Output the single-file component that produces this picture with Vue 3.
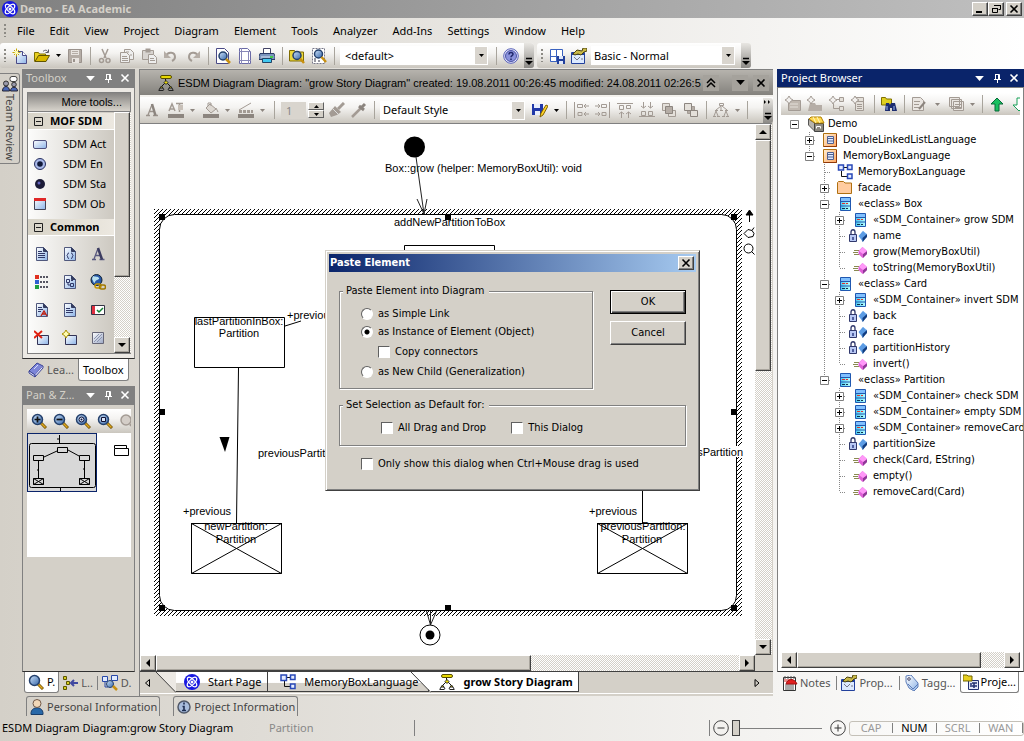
<script setup>
import { ref, computed } from 'vue'

const menus = ['File', 'Edit', 'View', 'Project', 'Diagram', 'Element', 'Tools', 'Analyzer', 'Add-Ins', 'Settings', 'Window', 'Help']

const fileTools = [
  { icon: 'new', label: 'New' }, { icon: 'open', label: 'Open', arrow: true }, { icon: 'save', label: 'Save' }, { sep: true },
  { icon: 'cut', label: 'Cut' }, { icon: 'copy', label: 'Copy' }, { icon: 'paste', label: 'Paste' },
  { icon: 'undo', label: 'Undo' }, { icon: 'redo', label: 'Redo' }, { sep: true },
  { icon: 'preview', label: 'Print preview' }, { icon: 'page', label: 'Page setup' }, { icon: 'print', label: 'Print' }, { sep: true },
  { icon: 'findproj', label: 'Find in project' }, { icon: 'finddoc', label: 'Find in document' }, { sep: true }
]
const alignTools = ['al-left', 'al-right', 'al-top', 'al-bottom', 'front', 'back']
const browserTools = [
  { icon: 'npkg', label: 'New model' }, { icon: 'nfolder', label: 'New package' }, { icon: 'ndiag', label: 'New diagram' },
  { icon: 'nelem', label: 'New element' }, { sep: true }, { icon: 'binoc', label: 'Find' }, { sep: true },
  { icon: 'docgen', label: 'Documentation', arrow: true, wide: true }, { icon: 'copies', label: 'Code', arrow: true }, { sep: true },
  { icon: 'up', label: 'Move up' }, { icon: 'down', label: 'Move down' }
]
const sdmItems = [
  { icon: 'act', label: 'SDM Act' }, { icon: 'end', label: 'SDM En' },
  { icon: 'start', label: 'SDM Sta' }, { icon: 'obj', label: 'SDM Ob' }
]
const commonItems = ['note', 'doc', 'text', 'legend', 'ddoc', 'link', 'adoc', 'doc2', 'check', 'del', 'newel', 'shade']

const c = (label) => ({ label: '«SDM_Container» ' + label, icon: 't-class', closed: true })
const attr = (label) => ({ label, icon: 't-attr' })
const op = (label) => ({ label, icon: 't-op' })
const model = {
  label: 'Demo', icon: 't-root', children: [
    { label: 'DoubleLinkedListLanguage', icon: 't-pkg', closed: true },
    { label: 'MemoryBoxLanguage', icon: 't-pkg', children: [
      { label: 'MemoryBoxLanguage', icon: 't-diag' },
      { label: 'facade', icon: 't-folder', closed: true },
      { label: '«eclass» Box', icon: 't-class', children: [c('grow SDM'), attr('name'), op('grow(MemoryBoxUtil)'), op('toString(MemoryBoxUtil)')] },
      { label: '«eclass» Card', icon: 't-class', children: [c('invert SDM'), attr('back'), attr('face'), attr('partitionHistory'), op('invert()')] },
      { label: '«eclass» Partition', icon: 't-class', children: [c('check SDM'), c('empty SDM'), c('removeCard'), attr('partitionSize'), op('check(Card, EString)'), op('empty()'), op('removeCard(Card)')] }
    ] }
  ]
}
const rows = computed(() => {
  const out = []
  const walk = (node, guides, last, root) => {
    out.push({ ...node, guides, last, root, sign: node.children ? 'minus' : node.closed ? 'plus' : '' })
    const kids = node.children || []
    kids.forEach((k, i) => walk(k, [...guides, !last], i === kids.length - 1, false))
  }
  walk(model, [], true, true)
  return out
})

const mode = ref('instance')
const zoom = ref(0)
const handles = [[159, 214], [445, 214], [731, 214], [159, 409], [731, 409], [159, 605], [445, 605], [731, 605]]
</script>

<template>
  <svg class="defs" aria-hidden="true">
    <defs>
      <linearGradient id="gBlue" x1="0" y1="0" x2="1" y2="1"><stop offset="0" stop-color="#fff" /><stop offset="1" stop-color="#8db4e8" /></linearGradient>
      <linearGradient id="gSph" x1="0" y1="0" x2="1" y2="1"><stop offset="0" stop-color="#cfe4fb" /><stop offset="1" stop-color="#3465a8" /></linearGradient>
      <linearGradient id="gPkg" x1="0" y1="0" x2="1" y2="1"><stop offset="0" stop-color="#fff0d8" /><stop offset="1" stop-color="#ffa860" /></linearGradient>
      <linearGradient id="gCls" x1="0" y1="0" x2="1" y2="0"><stop offset="0" stop-color="#48c8f0" /><stop offset="1" stop-color="#b8ffff" /></linearGradient>
      <linearGradient id="gShade" x1="0" y1="0" x2="1" y2="1"><stop offset="0" stop-color="#fff" /><stop offset="1" stop-color="#9aa6c4" /></linearGradient>
      <pattern id="hatch" width="4" height="4" patternUnits="userSpaceOnUse">
        <path fill="#000" shape-rendering="crispEdges" d="M3 0h1v1h-1zM2 1h1v1h-1zM1 2h1v1h-1zM0 3h1v1h-1z" />
      </pattern>
    </defs>
    <symbol id="logo" viewBox="0 0 16 16"><circle cx="8" cy="8" r="8" fill="#1818e0" /><g fill="none" stroke="#fff" stroke-width="1.3"><ellipse cx="8" cy="8" rx="6" ry="2.600" transform="rotate(45 8 8)" /><ellipse cx="8" cy="8" rx="6" ry="2.600" transform="rotate(-45 8 8)" /></g><circle cx="8" cy="8" r="1.500" fill="#fff" /></symbol>
    <symbol id="new" viewBox="0 0 16 16"><path d="M4.500 3.500h6l4 4v8h-10z" fill="url(#gBlue)" stroke="#4a4a86" /><path d="M10.500 3.500v4h4" fill="#fff" stroke="#4a4a86" /><path d="M4.500 .500v8M.500 4.500h8M2 2l5 5M7 2l-5 5" stroke="#c8a800" /><circle cx="4.500" cy="4.500" r="1.800" fill="#ffffb0" /></symbol>
    <symbol id="open" viewBox="0 0 16 16"><path d="M.500 13.500v-9h4l1 1.500h6v2" fill="#e8d020" stroke="#807000" /><path d="M1 13.500l3.500-6h11l-3.500 6z" fill="#d8b800" stroke="#605400" /><path d="M9 3.500c2-2 4-1.500 5 .500M14.500 1.500v3h-3" fill="none" stroke="#556" /></symbol>
    <symbol id="save" viewBox="0 0 16 16"><path d="M1.500 1.500h13v13h-13z" fill="#b5ada6" stroke="#9a928c" /><path d="M4 2h8v5h-8zM5 10h7v5h-7z" fill="#e8e4e0" /><path d="M5 3.500h6M5 5.500h6" stroke="#b5ada6" /><path d="M6 11h2v3h-2z" fill="#9a928c" /></symbol>
    <symbol id="cut" viewBox="0 0 16 16"><path d="M5 1l4 9M11 1l-4 9" stroke="#a39b94" stroke-width="1.500" /><circle cx="4.500" cy="12.500" r="2" fill="none" stroke="#a39b94" stroke-width="1.500" /><circle cx="11" cy="12.500" r="2" fill="none" stroke="#a39b94" stroke-width="1.500" /></symbol>
    <symbol id="copy" viewBox="0 0 16 16"><path d="M5.500 1.500h6l3 3v7h-9z" fill="#eee" stroke="#a39b94" /><path d="M1.500 4.500h6l3 3v7h-9z" fill="#eee" stroke="#a39b94" /><path d="M3 8.500h5M3 10.500h6M3 12.500h6M7 4h3M11 7h2" stroke="#a39b94" /></symbol>
    <symbol id="paste" viewBox="0 0 16 16"><path d="M1.500 2.500h11v9h-11z" fill="#d8d4d0" stroke="#a39b94" /><path d="M4.500 .500h5v4h-5z" fill="#a39b94" /><path d="M7.500 6.500h5l3 3v6h-8z" fill="#eee" stroke="#a39b94" /><path d="M9 10.500h4M9 12.500h5" stroke="#a39b94" /></symbol>
    <symbol id="undo" viewBox="0 0 16 16"><path d="M3 8c2-5 9-4 9 1 0 2-1 3-3 4" fill="none" stroke="#a39b94" stroke-width="2" /><path d="M1 3v7h7z" fill="#b5ada6" /></symbol>
    <symbol id="redo" viewBox="0 0 16 16"><path d="M13 8c-2-5-9-4-9 1 0 2 1 3 3 4" fill="none" stroke="#a39b94" stroke-width="2" /><path d="M15 3v7h-7z" fill="#b5ada6" /></symbol>
    <symbol id="lens" viewBox="0 0 16 16"><path d="M10 10l5 5" stroke="#705000" stroke-width="3" /><path d="M10 10l4.500 4.500" stroke="#e0a820" stroke-width="1.500" /><circle cx="6.500" cy="6.500" r="5" fill="url(#gSph)" stroke="#24406c" stroke-width="1.500" /></symbol>
    <symbol id="preview" viewBox="0 0 16 16"><path d="M1.500 .500h8l4 4v11h-12z" fill="#fff" stroke="#4a4a86" /><circle cx="8" cy="8" r="4" fill="url(#gSph)" stroke="#24406c" stroke-width="1.500" /><path d="M11 11l4 4" stroke="#c89010" stroke-width="2.500" /></symbol>
    <symbol id="page" viewBox="0 0 16 16"><path d="M2.500 .500h8l3 3v12h-11z" fill="#fff" stroke="#6a6aa6" /><path d="M4.500 0v16M11.500 3v13M2 3.500h11M2 12.500h12" stroke="#8888b8" /></symbol>
    <symbol id="print" viewBox="0 0 16 16"><path d="M4.500 5v-4.500h7v4.500" fill="#fff" stroke="#446" /><path d="M1 5.500h14l1 3v3h-16v-3z" fill="#7b95bd" stroke="#2a3a66" /><path d="M2 9h12" stroke="#d8e4f6" /><path d="M11 9h3" stroke="#20d020" stroke-width="1.500" /><path d="M3.500 10.500h9v4h-9z" fill="#40c8f0" stroke="#246" /></symbol>
    <symbol id="findproj" viewBox="0 0 16 16"><path d="M.500 2.500h5l1 1.500h8v9h-14z" fill="#ecd83a" stroke="#806c00" /><circle cx="8" cy="7.500" r="4" fill="url(#gSph)" stroke="#24406c" stroke-width="1.500" /><path d="M11 10.500l4 4.500" stroke="#c89010" stroke-width="2.500" /></symbol>
    <symbol id="finddoc" viewBox="0 0 16 16"><path d="M1.500 .500h12v15h-12z" fill="#fff" stroke="#778" stroke-dasharray="2 1" /><path d="M3 11h2M3 13h2M7 13h2" stroke="#334" /><circle cx="7.500" cy="6" r="4" fill="url(#gSph)" stroke="#24406c" stroke-width="1.500" /><path d="M10.500 9l4.500 5" stroke="#c89010" stroke-width="2.500" /></symbol>
    <symbol id="help" viewBox="0 0 16 16"><circle cx="8" cy="8" r="7.300" fill="#e8eaff" stroke="#5a62b8" /><circle cx="8" cy="8" r="5.500" fill="#8a92dc" stroke="#4c54a6" /><path d="M6 6.500c0-3 4-2.500 4-.300 0 1.500-2 1.300-2 3M8 10.500v1.500" fill="none" stroke="#20286c" stroke-width="1.500" /></symbol>
    <symbol id="layout" viewBox="0 0 16 16"><path d="M1.500 1.500h12v12h-12zM7.500 1.500v12M1.500 8.500h12" fill="#fff" stroke="#3a62c0" /><path d="M8 8h8v8h-8z" fill="#22409c" /><path d="M10 8h4v3h-4zM10 13h4v3h-4z" fill="#dfe8fa" /></symbol>
    <symbol id="props" viewBox="0 0 16 16"><path d="M.500 4.500h13v11h-13z" fill="#dceaff" stroke="#22409c" /><path d="M1 5h12v2h-12z" fill="#22409c" /><path d="M3 9l3 3 3-3M10 11h2" stroke="#778" fill="none" /><path d="M2 6l4-4 5 1 1-3h4v3l-3 1-3 3-3-1-3 1z" fill="#c8b848" stroke="#4c4410" /></symbol>
    <symbol id="fontA" viewBox="0 0 16 16"><path d="M2 13.500h4M9 13.500h5M4 13l4-10.500M5.500 9.500h5" fill="none" stroke="#9b938c" stroke-width="1.300" /><path d="M8 2l3.500 11.500" stroke="#8c857f" stroke-width="2.500" /></symbol>
    <symbol id="fontcol" viewBox="0 0 16 16"><path d="M1 9l3-7 3 7M2 7h4M8 1.500h7M11.500 2v8" fill="none" stroke="#a39b94" stroke-width="1.500" /><path d="M10 3h5v5h-5z" fill="#c8c0b8" /><path d="M0 12h16v4h-16z" fill="#8c857f" /></symbol>
    <symbol id="fill" viewBox="0 0 16 16"><path d="M3 6l4-4 6 5-5 4z" fill="#ddd8d2" stroke="#a39b94" /><path d="M5 4v-3h3v3M13 6l2 4" stroke="#a39b94" fill="none" /><path d="M0 12h16v4h-16z" fill="#8c857f" /></symbol>
    <symbol id="linecol" viewBox="0 0 16 16"><path d="M1 8l12-7" stroke="#a39b94" fill="none" /><path d="M1 9.500h14" stroke="#a39b94" stroke-width="3" stroke-dasharray="3 1" /><path d="M0 12h16v4h-16z" fill="#8c857f" /></symbol>
    <symbol id="brush" viewBox="0 0 16 16"><path d="M15 1l-6 6" stroke="#a39b94" stroke-width="3" /><path d="M6 4l6 6-4 3-6 2-2-4z" fill="#a39b94" /><path d="M4 7l5 5" stroke="#ddd" /></symbol>
    <symbol id="dropper" viewBox="0 0 16 16"><path d="M10 6l-8 8-1 1" stroke="#a39b94" stroke-width="2.500" /><path d="M8 4l5 4M10 6l4-4" stroke="#8c857f" stroke-width="3" /></symbol>
    <symbol id="savestyle" viewBox="0 0 16 16"><path d="M0 2h11v11h-11z" fill="#2038a8" /><path d="M2 2h6v4h-6zM3 9h5v4h-5z" fill="#e8eefc" /><path d="M8 15l1-4 5-8 2 1-5 9z" fill="#ffd428" stroke="#806000" /></symbol>
    <symbol id="al-left" viewBox="0 0 16 16"><path d="M1.500 0v16M4.500 2.500h5v3h-5zM5 10.500h4v3h-4zM11 4h5M11 12h5M13 2l-2 2 2 2M13 10l-2 2 2 2" fill="none" stroke="#a39b94" /></symbol>
    <symbol id="al-right" viewBox="0 0 16 16"><path d="M14.500 0v16M6.500 2.500h5v3h-5zM7 10.500h4v3h-4zM0 4h5M0 12h5M3 2l2 2-2 2M3 10l2 2-2 2" fill="none" stroke="#a39b94" /></symbol>
    <symbol id="al-top" viewBox="0 0 16 16"><path d="M0 1.500h16M2.500 3.500h4v4h-4zM9.500 3.500h4v3h-4zM4.500 10v6M11.500 10v6M2 12l2.500-2 2.500 2M9 12l2.500-2 2.500 2" fill="none" stroke="#a39b94" /></symbol>
    <symbol id="al-bottom" viewBox="0 0 16 16"><path d="M0 14.500h16M2.500 9.500h4v4h-4zM9.500 9.500h4v4h-4zM4.500 0v6M11.500 0v6M2 4l2.500 2 2.500-2M9 4l2.500 2 2.500-2" fill="none" stroke="#a39b94" /></symbol>
    <symbol id="front" viewBox="0 0 16 16"><path d="M1.500 1.500h7v7h-7zM7.500 8.500h7v6h-7z" fill="#e4e0da" stroke="#a39b94" /><path d="M4.500 4.500h7v7h-7z" fill="#b5ada6" stroke="#8c857f" /></symbol>
    <symbol id="back" viewBox="0 0 16 16"><path d="M4.500 4.500h7v7h-7z" fill="#b5ada6" stroke="#a39b94" /><path d="M1.500 1.500h7v7h-7zM7.500 8.500h7v6h-7z" fill="#e4e0da" stroke="#8c857f" /></symbol>
    <symbol id="tree" viewBox="0 0 16 16"><path d="M6.500 1.500h4v2h-4zM8 4l-5 4M9 4l5 4M8 4v4M3 9l-2 5M3 9l2 5M13 9l-2 5M13 9l2 5M2 8.500h3M7 8.500h3M12 8.500h3M0 14.500h3M4 14.500h3M9 14.500h3M13 14.500h3" fill="none" stroke="#a39b94" /></symbol>
    <symbol id="npkg" viewBox="0 0 16 16"><path d="M3.500 4.500h12v10h-12z" fill="#c0b8b0" stroke="#a39b94" /><path d="M5 8h8M5 11h8" stroke="#e4e0da" /><path d="M4 0l1.500 2.500 2.500 1.500-2.500 1.500-1.500 2.500-1.500-2.500-2.500-1.500 2.500-1.500z" fill="#f2f0ee" stroke="#a39b94" /></symbol>
    <symbol id="nfolder" viewBox="0 0 16 16"><path d="M3 7h5l1 2h6v6h-14z" fill="#b5ada6" /><path d="M4 0l1.500 2.500 2.500 1.500-2.500 1.500-1.500 2.500-1.500-2.500-2.500-1.500 2.500-1.500z" fill="#f2f0ee" stroke="#a39b94" /></symbol>
    <symbol id="ndiag" viewBox="0 0 16 16"><path d="M10.500 1.500h4v4h-4zM10.500 10.500h4v4h-4zM7 3.500h3M4.500 8v4.500h6" fill="#e4e0da" stroke="#a39b94" /><path d="M4 0l1.500 2.500 2.500 1.500-2.500 1.500-1.500 2.500-1.500-2.500-2.500-1.500 2.500-1.500z" fill="#f2f0ee" stroke="#a39b94" /></symbol>
    <symbol id="nelem" viewBox="0 0 16 16"><path d="M4.500 1.500h8v13h-8z" fill="#e4e0da" stroke="#a39b94" /><path d="M5 5.500h8M6 8.500h5M6 10.500h5M6 12.500h5" stroke="#a39b94" /><path d="M4 0l1.500 2.500 2.500 1.500-2.500 1.500-1.500 2.500-1.500-2.500-2.500-1.500 2.500-1.500z" fill="#f2f0ee" stroke="#a39b94" /></symbol>
    <symbol id="binoc" viewBox="0 0 16 16"><path d="M.500 1.500h4l1 1.500h5v6h-10z" fill="#e0d020" stroke="#807000" /><path d="M5 7h3l1 2 1-2h4l2 8h-5v-3h-2v3h-5z" fill="#1c2c70" /><path d="M6 10v4M13 10v4" stroke="#9db8f0" /></symbol>
    <symbol id="docgen" viewBox="0 0 16 16"><path d="M1.500 1.500h8l3 3v10h-11z" fill="#eae6e2" stroke="#a39b94" /><path d="M3 5.500h6M3 8.500h5M3 11.500h5" stroke="#a39b94" /><path d="M14 6l-6 7" stroke="#8c857f" stroke-width="2" /></symbol>
    <symbol id="copies" viewBox="0 0 16 16"><path d="M1.500 1.500h10v9h-10zM3.500 3.500h10v9h-10zM5.500 5.500h10v9h-10z" fill="#eae6e2" stroke="#a39b94" /><path d="M7 8.500h6M7 11.500h6" stroke="#a39b94" /></symbol>
    <symbol id="up" viewBox="0 0 16 16"><path d="M8 2l6 6h-4v7h-4v-7h-4z" fill="#18c060" stroke="#086838" /></symbol>
    <symbol id="down" viewBox="0 0 16 16"><path d="M8 15l6-6h-4v-7h-4v7h-4z" fill="#fff" stroke="#18a058" /></symbol>
    <symbol id="story" viewBox="0 0 16 16"><path d="M7.500 4v3M8 7l-5 5M8 7l5 5" fill="none" stroke="#111" /><rect x="2.500" y=".500" width="11" height="3" rx="1.500" fill="#e8d800" stroke="#554c00" /><path d="M8 5.500l2 2-2 2-2-2z" fill="#e8d800" stroke="#333" /><path d="M3.500 11l1.500 2h-3zM12.500 11l1.500 2h-3z" fill="#e8d800" stroke="#222" /><path d="M.500 15.500h5M10.500 15.500h5M2 13l-1 2M5 13l1 2M11 13l-1 2M14 13l1 2" stroke="#222" /></symbol>
    <symbol id="boxes" viewBox="0 0 16 16"><path d="M7 3.500h4M4.500 7v5.500h6" fill="none" stroke="#111" /><path d="M1 1h5.500v5.500h-5.500zM10.500 1h4.500v4.500h-4.500zM10.500 10h4.500v4.500h-4.500z" fill="#e4ecff" stroke="#2848b8" stroke-width="1.500" /></symbol>
    <symbol id="people" viewBox="0 0 16 16"><rect x="8" y=".500" width="7" height="5" rx="2" fill="#fff" stroke="#444" /><circle cx="4" cy="7.500" r="2.500" fill="#99a" stroke="#333" /><circle cx="12" cy="8.500" r="2.300" fill="#99a" stroke="#333" /><path d="M.500 15c0-6 7-6 7 0zM8.500 15c0-5 7-5 7 0z" fill="#4a68b8" stroke="#223" /></symbol>
    <symbol id="act" viewBox="0 0 16 16"><rect x="1.500" y="4.500" width="13" height="8" rx="1.500" fill="url(#gBlue)" stroke="#50507c" /></symbol>
    <symbol id="end" viewBox="0 0 16 16"><circle cx="8" cy="8" r="5.500" fill="#a8b8e8" stroke="#283060" /><circle cx="8" cy="8" r="2.800" fill="#101838" /></symbol>
    <symbol id="start" viewBox="0 0 16 16"><circle cx="8" cy="8" r="5" fill="#1c1c38" /><circle cx="7" cy="7" r="1.500" fill="#6464c0" /></symbol>
    <symbol id="obj" viewBox="0 0 16 16"><path d="M2.500 2.500h11v11h-11z" fill="url(#gBlue)" stroke="#445" /><path d="M2 2h12v3h-12z" fill="#e02828" /></symbol>
    <symbol id="sheet" viewBox="0 0 16 16"><path d="M2.500 1.500h7l4 4v9h-11z" fill="url(#gBlue)" stroke="#50587c" /><path d="M9.500 1.500v4h4" fill="#333c60" stroke="#333c60" /></symbol>
    <symbol id="note" viewBox="0 0 16 16"><use href="#sheet" /><path d="M4 5.500h4M4 7.500h7M4 9.500h7M4 11.500h7" stroke="#303868" /></symbol>
    <symbol id="doc" viewBox="0 0 16 16"><use href="#sheet" /><path d="M7 7c-2 0-1 2-2 2.500 1 .500 0 3 2 3M9 7c2 0 1 2 2 2.500-1 .500 0 3-2 3" fill="none" stroke="#303868" /></symbol>
    <symbol id="text" viewBox="0 0 16 16"><path d="M2 13.500h4M9.500 13.500h5M4 13l4-10.500M5.500 9.500h5" fill="none" stroke="#5a5a80" stroke-width="1.300" /><path d="M8 2l4 11.500" stroke="#3c3c60" stroke-width="2.500" /></symbol>
    <symbol id="legend" viewBox="0 0 16 16"><path d="M6 3h9M6 8h9M6 13h9" stroke="#223" stroke-width="1.500" stroke-dasharray="2 1" /><path d="M1 1h4v4h-4z" fill="#e03020" /><path d="M1 6h4v4h-4z" fill="#3060d0" /><path d="M1 11h4v4h-4z" fill="#20a040" /></symbol>
    <symbol id="ddoc" viewBox="0 0 16 16"><use href="#sheet" /><path d="M4.500 5.500h3v3h-3zM8.500 9.500h3v3h-3zM9 6.500h2M6 8v3h2" fill="none" stroke="#303868" /></symbol>
    <symbol id="link" viewBox="0 0 16 16"><circle cx="6.500" cy="6" r="5.500" fill="#2858a8" stroke="#123" /><path d="M3 2c2 1 5 0 6 2s-3 1-4 4-2-2-3-3z" fill="#b8e0f0" /><rect x="5" y="10" width="6" height="4" rx="2" fill="none" stroke="#c89800" stroke-width="1.500" /><rect x="9.500" y="11" width="6" height="4" rx="2" fill="none" stroke="#a07800" stroke-width="1.500" /></symbol>
    <symbol id="adoc" viewBox="0 0 16 16"><use href="#sheet" /><path d="M4 5.500h4M4 7.500h5M4 9.500h3" stroke="#303868" /><path d="M7 14l3-5 3 5M8 12h4" fill="none" stroke="#c02010" stroke-width="1.300" /></symbol>
    <symbol id="doc2" viewBox="0 0 16 16"><use href="#sheet" /><path d="M4 6.500h4M4 8.500h7M4 10.500h7" stroke="#303868" /></symbol>
    <symbol id="check" viewBox="0 0 16 16"><path d="M1.500 3.500h13v9h-13z" fill="#fff" stroke="#334" /><path d="M2 4h3v8h-3z" fill="#e03040" /><path d="M7 8l2 2 4-4" fill="none" stroke="#108030" stroke-width="1.500" /></symbol>
    <symbol id="del" viewBox="0 0 16 16"><path d="M3.500 5.500h11v9h-11z" fill="url(#gBlue)" stroke="#335" /><path d="M0 1l8 7M8 1l-8 7" stroke="#e02010" stroke-width="2" /></symbol>
    <symbol id="newel" viewBox="0 0 16 16"><path d="M3.500 5.500h11v9h-11z" fill="url(#gBlue)" stroke="#335" /><path d="M4 0l1.500 2.500 2.500 1.500-2.500 1.500-1.500 2.500-1.500-2.500-2.500-1.500 2.500-1.500z" fill="#fffcb0" stroke="#a89000" /></symbol>
    <symbol id="shade" viewBox="0 0 16 16"><path d="M2.500 2.500h11v11h-11z" fill="url(#gShade)" stroke="#667" /><path d="M4 12l8-8M7 12l5-5M4 9l5-5" stroke="#8a94b0" /></symbol>
    <symbol id="book" viewBox="0 0 16 16"><path d="M1 9l8-8 6 3-8 9z" fill="#7d86d8" stroke="#3c4496" /><path d="M1 9v2l6 4v-2zM7 13v2l8-9v-2" fill="#e8eaff" stroke="#3c4496" /><path d="M6 7l4-4" stroke="#d8dcff" /></symbol>
    <symbol id="z-in" viewBox="0 0 16 16"><use href="#lens" /><path d="M3.500 6.500h6M6.500 3.500v6" stroke="#111" stroke-width="1.700" /></symbol>
    <symbol id="z-out" viewBox="0 0 16 16"><use href="#lens" /><path d="M3.500 6.500h6" stroke="#111" stroke-width="1.700" /></symbol>
    <symbol id="z-fit" viewBox="0 0 16 16"><use href="#lens" /><circle cx="6.500" cy="6.500" r="2.500" fill="#dce8fa" stroke="#113" /><circle cx="6.500" cy="6.500" r="1" fill="#113" /></symbol>
    <symbol id="z-page" viewBox="0 0 16 16"><use href="#lens" /><path d="M4.500 4.500h4v4h-4z" fill="#dce8fa" stroke="#113" /></symbol>
    <symbol id="z-off" viewBox="0 0 16 16"><circle cx="7" cy="7" r="5" fill="#d4cec8" stroke="#a39b94" stroke-width="1.500" /><path d="M11 11l4 4" stroke="#a39b94" stroke-width="2.500" /></symbol>
    <symbol id="layers" viewBox="0 0 16 16"><path d="M1.500 1.500h3v3h-3zM1.500 11.500h3v3h-3zM4.500 6.500h3v3h-3z" fill="#d8d020" stroke="#5c5400" /><path d="M9 8h7M12 5l-3 3 3 3" fill="none" stroke="#4048a0" stroke-width="2" /></symbol>
    <symbol id="dfind" viewBox="0 0 16 16"><path d="M.500 1.500h5v5h-5zM9.500 .500h6v5h-6z" fill="#dfeaff" stroke="#2848a8" /><path d="M3 6v6h3" fill="none" stroke="#2848a8" /><circle cx="8" cy="9" r="3.500" fill="url(#gSph)" stroke="#24406c" /><path d="M11 11l4 4" stroke="#c89010" stroke-width="2.500" /></symbol>
    <symbol id="person" viewBox="0 0 16 16"><path d="M2 15.500c-1-9 13-9 12 0z" fill="#2868a8" stroke="#183c68" /><circle cx="8" cy="4.500" r="4" fill="#f2d8b8" stroke="#705848" /></symbol>
    <symbol id="info" viewBox="0 0 16 16"><circle cx="8" cy="8" r="6" fill="#a8bcdc" stroke="#505868" stroke-width="1.500" /><path d="M8 3.500v2M6.500 7.500h1.500v4M6 11.500h4" fill="none" stroke="#1c2c50" stroke-width="1.600" /></symbol>
    <symbol id="notes" viewBox="0 0 16 16"><path d="M1.500 2.500h12v13h-12z" fill="#fff" stroke="#333" /><path d="M3 1v3M6 1v3M9 1v3M12 1v3M3 10h9M3 12h9M3 14h9" stroke="#555" /><path d="M2 4h9v3h-9z" fill="#e89090" /><path d="M4 9c1-5 8-7 11 0z" fill="#e02020" stroke="#a01010" /></symbol>
    <symbol id="tag" viewBox="0 0 16 16"><path d="M2 1l5-1 7 8v4l-4 4-5-3-3-6z" fill="url(#gBlue)" stroke="#5c7cb8" /><path d="M4 9l5 5 5-5" fill="none" stroke="#5c7cb8" /><circle cx="5" cy="4" r="1.300" fill="#fff" stroke="#446" /></symbol>
    <symbol id="proj" viewBox="0 0 16 16"><path d="M5.500 6.500h10v9h-10z" fill="#e4e8f8" stroke="#223070" /><path d="M9 9h5M9 12h5M8 9v4M11 9v5" stroke="#223070" stroke-width="1.500" /><path d="M0 1h4l1 1h4v5h-9z" fill="#e8d020" stroke="#706400" /></symbol>

    <symbol id="t-root" viewBox="0 0 22 16"><path d="M4.500 3v6l6 6v-8z" fill="#b8b4ac" stroke="#555" /><path d="M10.500 7.500h9v8h-9z" fill="#8c8880" stroke="#444" /><path d="M5 3l2-2h10l3 6h-9z" fill="#ffd850" stroke="#b08000" /><path d="M9 1l3 6M13 1l3 6" stroke="#fff6c0" /><path d="M12.500 12.500v-2h4v2" fill="none" stroke="#fff" /></symbol>
    <symbol id="t-pkg" viewBox="0 0 22 16"><path d="M4.500 1.500h13v13h-13z" fill="url(#gPkg)" stroke="#b07010" /><path d="M17.500 2v12.500h-13" fill="none" stroke="#903808" /><path d="M8.500 4.500h6v7h-6z" fill="#dce8ff" stroke="#506090" /><path d="M9 6.500h5M9 9h5" stroke="#506090" /></symbol>
    <symbol id="t-diag" viewBox="0 0 22 16"><path d="M10 3.500h4M7.500 7v5.500h6" fill="none" stroke="#111" /><path d="M4.500 1h5v5h-5zM13.500 1h4.500v4.500h-4.500zM13.500 10h4.500v4.500h-4.500z" fill="#e4ecff" stroke="#2848b8" stroke-width="1.500" /></symbol>
    <symbol id="t-folder" viewBox="0 0 22 16"><path d="M3.500 13.500v-11l1-1h5l1.500 1.500h6.500v10.500z" fill="#ffcca0" stroke="#b07010" /></symbol>
    <symbol id="t-class" viewBox="0 0 22 16"><path d="M6.500 1.500h10v13h-10z" fill="url(#gCls)" stroke="#2058b0" /><path d="M7 2h9v3h-9z" fill="#80c0ff" /><path d="M7 5.500h9M7 10h9" stroke="#2058b0" /><path d="M8 7.500h6" stroke="#e03030" stroke-dasharray="3 1" /><path d="M8 12.500h6" stroke="#103050" stroke-dasharray="3 1" /></symbol>
    <symbol id="t-attr" viewBox="0 0 22 16"><path d="M2 7v-3c0-3 4-3 4 0v3" fill="none" stroke="#30386c" stroke-width="1.300" /><path d="M.500 6.500h7v7h-7z" fill="#b8c8f4" stroke="#30386c" /><path d="M3 9h2v3h-2z" fill="#5060a0" /><path d="M10 8l4-5 4 3-4 6z" fill="#8ac0f4" /><path d="M9.500 8l4.500-5 4 4-4 7z" fill="#5c9ce4" /><path d="M13.500 10l4.500-4v3l-4.500 5z" fill="#103c80" /></symbol>
    <symbol id="t-op" viewBox="0 0 22 16"><path d="M5 6.500h5M4 8.500h5M5 10.500h5" stroke="#8a8a50" /><path d="M13.500 3l4.500 4v3l-4.500 4-4-4v-3z" fill="#e060d8" /><path d="M14 10l4-3v3l-4 4z" fill="#903898" /><path d="M13.500 3l4.500 4-4 3-4-3z" fill="#ff98f8" /></symbol>
    <symbol id="minus" viewBox="0 0 9 9"><path d="M.500 .500h8v8h-8z" fill="#fff" stroke="#808080" /><path d="M2 4.500h5" stroke="#000" /></symbol>
    <symbol id="plus" viewBox="0 0 9 9"><path d="M.500 .500h8v8h-8z" fill="#fff" stroke="#808080" /><path d="M2 4.500h5M4.500 2v5" stroke="#000" /></symbol>
    <symbol id="fold" viewBox="0 0 9 9"><path d="M.500 .500h8v8h-8zM2 4.500h5" fill="none" stroke="#202020" /></symbol>
    <symbol id="dn" viewBox="0 0 7 4"><path d="M0 0h7l-3.500 4z" fill="currentColor" /></symbol>
    <symbol id="pin" viewBox="0 0 10 10"><path d="M2 6.500h7M3.500 1.500h4v5M6.500 1v5M5.500 7v3M3.500 1v5" fill="none" stroke="currentColor" /></symbol>
    <symbol id="x" viewBox="0 0 10 10"><path d="M1.500 1.500l7 7M8.500 1.500l-7 7" stroke="currentColor" stroke-width="1.600" /></symbol>
    <symbol id="a-up" viewBox="0 0 8 8"><path d="M4 2l4 4h-8z" /></symbol>
    <symbol id="a-dn" viewBox="0 0 8 8"><path d="M4 6l4-4h-8z" /></symbol>
    <symbol id="a-lt" viewBox="0 0 8 8"><path d="M2 4l4-4v8z" /></symbol>
    <symbol id="a-rt" viewBox="0 0 8 8"><path d="M6 4l-4-4v8z" /></symbol>
    <symbol id="more" viewBox="0 0 8 8"><path d="M1 1.500h6" stroke="#000" stroke-width="1.500" /><path d="M0 4h8l-4 4z" /></symbol>
  </svg>

  <div class="app">
    <header class="titlebar">
      <svg class="i16"><use href="#logo" /></svg>
      <h1>Demo - EA Academic</h1>
      <button class="winbtn" aria-label="Minimize"><svg class="i10" viewBox="0 0 10 10"><path d="M1 8h6" stroke="#000" stroke-width="2" /></svg></button>
      <button class="winbtn" aria-label="Restore"><svg class="i10" viewBox="0 0 10 10"><path d="M3.500 1.500h6v4h-2M1.500 4.500h5v4h-5zM3 1.500h7M1 4.500h6" fill="none" stroke="#000" /></svg></button>
      <button class="winbtn apart" aria-label="Close"><svg class="i10"><use href="#x" /></svg></button>
    </header>

    <nav class="menubar">
      <span class="grip"></span>
      <button v-for="m in menus" :key="m">{{ m }}</button>
    </nav>

    <div class="toolrow">
      <div class="toolbar main">
        <span class="grip"></span>
        <template v-for="(t, i) in fileTools" :key="i">
          <span v-if="t.sep" class="sep"></span>
          <button v-else class="tb" :aria-label="t.label"><svg class="i16"><use :href="'#' + t.icon" /></svg></button>
          <button v-if="t.arrow" class="drop" aria-label="More"><svg class="dn"><use href="#dn" /></svg></button>
        </template>
        <span class="combo"><select aria-label="Filter"><option>&lt;default&gt;</option></select><svg class="dn"><use href="#dn" /></svg></span>
        <span class="sep"></span>
        <button class="tb" aria-label="Help"><svg class="i16"><use href="#help" /></svg></button>
        <button class="overflow" aria-label="Toolbar options"><svg class="i8"><use href="#more" /></svg></button>
      </div>
      <div class="toolbar main">
        <span class="grip"></span>
        <button class="tb" aria-label="Save layout"><svg class="i16"><use href="#layout" /></svg></button>
        <button class="tb" aria-label="Properties"><svg class="i16"><use href="#props" /></svg></button>
        <span class="combo flat"><select aria-label="Workspace"><option>Basic - Normal</option></select><svg class="dn"><use href="#dn" /></svg></span>
        <button class="overflow" aria-label="Toolbar options"><svg class="i8"><use href="#more" /></svg></button>
      </div>
    </div>

    <div class="work">
      <aside class="strip">
        <button class="vtab"><svg class="i16"><use href="#people" /></svg><span>Team Review</span></button>
      </aside>

      <section class="left">
        <div class="ptitle"><h2>Toolbox</h2>
          <button aria-label="Menu"><svg class="dn9"><use href="#dn" /></svg></button><button aria-label="Pin"><svg class="i10"><use href="#pin" /></svg></button><button aria-label="Close"><svg class="i10"><use href="#x" /></svg></button></div>
        <div class="pbody toolbox">
          <button class="moretools">More tools...</button>
          <div class="tbmain">
            <div class="tblist">
              <h3><svg class="exp"><use href="#fold" /></svg>MOF SDM</h3>
              <ul class="sdm">
                <li v-for="s in sdmItems" :key="s.icon"><svg class="i16"><use :href="'#' + s.icon" /></svg><span>{{ s.label }}</span></li>
              </ul>
              <h3><svg class="exp"><use href="#fold" /></svg>Common</h3>
              <div class="common">
                <button v-for="k in commonItems" :key="k" :aria-label="k"><svg class="i16"><use :href="'#' + k" /></svg></button>
              </div>
            </div>
            <div class="vscroll tbs"><span class="thumb"></span><button aria-label="Scroll down"><svg class="i8"><use href="#a-dn" /></svg></button></div>
          </div>
        </div>
        <div class="ptabs up">
          <button class="ptab"><svg class="i16"><use href="#book" /></svg>Lea...</button>
          <button class="ptab on">Toolbox</button>
        </div>
        <div class="ptitle second"><h2>Pan &amp; Z...</h2>
          <button aria-label="Menu"><svg class="dn9"><use href="#dn" /></svg></button><button aria-label="Pin"><svg class="i10"><use href="#pin" /></svg></button><button aria-label="Close"><svg class="i10"><use href="#x" /></svg></button></div>
        <div class="pbody pan">
          <div class="toolbar zooms">
            <button v-for="z in ['z-in', 'z-out', 'z-fit', 'z-page', 'z-off']" :key="z" class="tb" :aria-label="z"><svg class="i16"><use :href="'#' + z" /></svg></button>
          </div>
          <div class="mini">
            <svg width="103" height="124" viewBox="0 0 103 124" fill="none" stroke="#000">
              <rect x=".500" y=".500" width="69" height="58" fill="#d8d8d8" stroke="#0a246a" />
              <rect x="2.500" y="10.500" width="66" height="44" rx="2" />
              <path d="M32.500 2v8M30 6h3M30.500 14.500h10v5h-10zM6.500 22.500h10v5h-10zM52.500 22.500h10v5h-10zM6.500 45.500h10v6h-10zM52.500 45.500h10v6h-10zM6.500 45.500l10 6M16.500 45.500l-10 6M52.500 45.500l10 6M62.500 45.500l-10 6M11.500 28v17M57.500 28v17M17 24l13-6M41 17l11 6M33.500 55v3M10 37h2M56 36h2" />
              <path d="M87.500 15.500h14v7h-14zM87.500 15v-2.500h12v3" />
            </svg>
          </div>
        </div>
        <div class="ptabs">
          <button class="ptab on"><svg class="i16"><use href="#lens" /></svg>P.</button>
          <button class="ptab"><svg class="i16"><use href="#layers" /></svg>L..</button>
          <span class="tabsep"></span>
          <button class="ptab"><svg class="i16"><use href="#dfind" /></svg>D.</button>
        </div>
      </section>

      <main class="center">
        <div class="dhead">
          <svg class="i16"><use href="#story" /></svg>
          <p><span>ESDM Diagram Diagram: "grow Story Diagram"</span><span>created: 19.08.2011 00:26:45</span><span>modified: 24.08.2011 02:26:5</span></p>
          <button aria-label="Collapse"><svg class="i10" viewBox="0 0 10 10"><path d="M1 5l4-4 4 4M1 9l4-4 4 4" fill="none" stroke="#000" stroke-width="1.500" /></svg></button>
          <button class="far" aria-label="Menu"><svg class="dn9"><use href="#dn" /></svg></button>
          <button class="near" aria-label="Close diagram"><svg class="i10"><use href="#x" /></svg></button>
        </div>
        <div class="toolbar fmt">
          <button class="tb" aria-label="Font"><svg class="i16"><use href="#fontA" /></svg></button>
          <template v-for="f in ['fontcol', 'fill', 'linecol']" :key="f">
            <button class="tb gap" :aria-label="f"><svg class="i16"><use :href="'#' + f" /></svg></button>
            <button class="drop dim" aria-label="More"><svg class="dn"><use href="#dn" /></svg></button>
          </template>
          <span class="sep gap"></span>
          <input class="num" aria-label="Line width" value="1" />
          <span class="spin"><button aria-label="Increase"><svg class="dn flip"><use href="#dn" /></svg></button><button aria-label="Decrease"><svg class="dn"><use href="#dn" /></svg></button></span>
          <button class="tb" aria-label="Apply style"><svg class="i16"><use href="#brush" /></svg></button>
          <button class="tb" aria-label="Pick style"><svg class="i16"><use href="#dropper" /></svg></button>
          <span class="sep"></span>
          <span class="combo style"><select aria-label="Style"><option>Default Style</option></select><svg class="dn"><use href="#dn" /></svg></span>
          <button class="tb" aria-label="Save style"><svg class="i16"><use href="#savestyle" /></svg></button>
          <button class="drop" aria-label="More"><svg class="dn"><use href="#dn" /></svg></button>
          <span class="sep"></span>
          <button v-for="a in alignTools" :key="a" class="tb" :aria-label="a"><svg class="i16"><use :href="'#' + a" /></svg></button>
          <span class="sep"></span>
          <button class="tb" aria-label="Auto layout"><svg class="i16"><use href="#tree" /></svg></button>
          <button class="drop dim" aria-label="More"><svg class="dn"><use href="#dn" /></svg></button>
          <span class="sep"></span>
          <button class="overflow" aria-label="Toolbar options"><svg class="i8" viewBox="0 0 8 8"><path d="M0 0l2 2-2 2zM4 0l2 2-2 2z" /></svg><svg class="i8"><use href="#more" /></svg></button>
        </div>
        <div class="canvasrow">
          <div class="canvas">
            <svg class="diagram" width="615" height="531" viewBox="140 124 615 531">
              <path fill="url(#hatch)" fill-rule="evenodd" d="M154 209h588v407h-588zM160 229v367q0 14 14 14h548q14 0 14-14v-367q0-14-14-14h-548q-14 0-14 14z" />
              <rect x="159.500" y="214.500" width="577" height="396" rx="15" fill="#fff" stroke="#000" />
              <g fill="none" stroke="#000">
                <path d="M404.500 260v-14.500h90v14.500M285 326l16-5M238.500 368l-2 155M642.500 480v43" />
                <path d="M191.500 523.500h90v50h-90zl90 50M281.500 523.500l-90 50M597.500 523.500h90v50h-90zl90 50M687.500 523.500l-90 50" />
              </g>
              <text x="394" y="226">addNewPartitionToBox</text>
              <g text-anchor="middle">
                <text x="239" y="325">lastPartitionInBox:</text>
                <text x="239" y="337">Partition</text>
                <text x="236" y="530">newPartition:</text>
                <text x="236" y="543">Partition</text>
                <text x="643" y="530">previousPartition:</text>
                <text x="642" y="543">Partition</text>
              </g>
              <path fill="#fff" d="M190 312h100v5h-100zM736 446h8v11h-8zM187 519h46v4h-46zM593 519h46v4h-46z" />
              <path fill="none" stroke="#000" d="M194.500 317.500h90v50h-90zM191 523.500h91M597 523.500h91" />
              <text x="287" y="319">+previous</text>
              <text x="258" y="457">previousPartition</text>
              <text x="743" y="456" text-anchor="end">previousPartition</text>
              <text x="183" y="515">+previous</text>
              <text x="589" y="515">+previous</text>
              <text x="385" y="172">Box::grow (helper: MemoryBoxUtil): void</text>
              <circle cx="414.500" cy="147" r="10.500" />
              <path d="M416 157l8 57M417 199l7 15 3-15M430.500 611v14M426.500 611l4 14 6-14" fill="none" stroke="#222" />
              <path d="M219.500 437h10l-4.500 15z" />
              <circle cx="430" cy="635" r="10" fill="#fff" stroke="#000" /><circle cx="430" cy="635" r="4.500" />
              <rect v-for="(h, i) in handles" :key="i" :x="h[0]" :y="h[1]" width="6" height="6" />
              <path d="M749.500 222v-10M746 215h7l-3.500-5z" stroke="#000" />
              <path d="M744 233.500l4-4 4 1 2-3M744 233.500l4 4 5-1 1-3-2-3" fill="none" stroke="#000" />
              <circle cx="748.500" cy="248.500" r="4.500" fill="none" stroke="#000" />
              <path d="M751.500 251.500l3 3" stroke="#000" />
            </svg>
          </div>
          <div class="vscroll"><button aria-label="Scroll up"><svg class="i8"><use href="#a-up" /></svg></button><span class="thumb"></span><button aria-label="Scroll down"><svg class="i8"><use href="#a-dn" /></svg></button></div>
        </div>
        <div class="hrow">
          <div class="hscroll"><button aria-label="Scroll left"><svg class="i8"><use href="#a-lt" /></svg></button><span class="thumb"></span><button aria-label="Scroll right"><svg class="i8"><use href="#a-rt" /></svg></button></div>
        </div>
        <div class="doctabs">
          <button class="nav" aria-label="Previous tab"><svg class="i8" viewBox="0 0 8 8"><path d="M1.500 4l4-3.500v7z" fill="none" stroke="#000" /></svg></button>
          <svg class="slant" viewBox="0 0 20 21"><path d="M0 0l20 20v-20z" fill="#ece9e4" /><path d="M0 0l20 20.500" stroke="#404040" /></svg>
          <button class="dtab first"><svg class="i16"><use href="#logo" /></svg>Start Page</button>
          <button class="dtab"><svg class="i16"><use href="#boxes" /></svg>MemoryBoxLanguage</button>
          <svg class="slant over" viewBox="0 0 20 21"><path d="M0 0l20 20v-20z" fill="#fff" /><path d="M0 0l20 20.500" stroke="#404040" /></svg>
          <button class="dtab on"><svg class="i16"><use href="#story" /></svg>grow Story Diagram</button>
          <button class="nav end" aria-label="Next tab"><svg class="i8" viewBox="0 0 8 8"><path d="M6 4l-4-3.500v7z" fill="none" stroke="#000" /></svg></button>
        </div>
      </main>

      <section class="right">
        <div class="ptitle active"><h2>Project Browser</h2>
          <button aria-label="Menu"><svg class="dn9"><use href="#dn" /></svg></button><button aria-label="Pin"><svg class="i10"><use href="#pin" /></svg></button><button aria-label="Close"><svg class="i10"><use href="#x" /></svg></button></div>
        <div class="pbody browser">
          <div class="toolbar btools">
            <template v-for="(t, i) in browserTools" :key="i">
              <span v-if="t.sep" class="sep"></span>
              <button v-else class="tb" :aria-label="t.label"><svg class="i16"><use :href="'#' + t.icon" /></svg></button>
              <button v-if="t.arrow" class="drop dim" :class="{ wide: t.wide }" aria-label="More"><svg class="dn"><use href="#dn" /></svg></button>
            </template>
          </div>
          <div class="tree" role="tree">
            <div v-for="(r, i) in rows" :key="i" class="row" role="treeitem">
              <span v-for="(g, k) in r.guides" :key="k" class="cell" :class="{ line: g }"></span>
              <span class="cell node" :class="{ last: r.last, root: r.root }"><svg v-if="r.sign" class="exp"><use :href="'#' + r.sign" /></svg></span>
              <svg class="ti"><use :href="'#' + r.icon" /></svg>
              <span>{{ r.label }}</span>
            </div>
          </div>
          <div class="hscroll"><button aria-label="Scroll left"><svg class="i8"><use href="#a-lt" /></svg></button><span class="thumb big"></span><button aria-label="Scroll right"><svg class="i8"><use href="#a-rt" /></svg></button></div>
        </div>
        <div class="ptabs rtabs">
          <button class="ptab"><svg class="i16"><use href="#notes" /></svg>Notes</button><span class="tabsep"></span>
          <button class="ptab"><svg class="i16"><use href="#props" /></svg>Prop...</button><span class="tabsep"></span>
          <button class="ptab"><svg class="i16"><use href="#tag" /></svg>Tagg...</button>
          <button class="ptab on"><svg class="i16"><use href="#proj" /></svg>Proje...</button>
        </div>
      </section>
    </div>

    <div class="hidden-tabs">
      <button><svg class="i16"><use href="#person" /></svg>Personal Information</button>
      <button><svg class="i16"><use href="#info" /></svg>Project Information</button>
    </div>

    <footer class="status">
      <span class="s1">ESDM Diagram Diagram:grow Story Diagram</span>
      <span class="s2">Partition</span>
      <span class="bar"></span>
      <span class="fillspace"></span>
      <span class="bar"></span>
      <button aria-label="Zoom out"><svg class="i16" viewBox="0 0 16 16"><circle cx="8" cy="8" r="7.300" fill="none" stroke="#444" /><path d="M4.500 8h7" stroke="#333" /></svg></button>
      <input v-model="zoom" type="range" min="0" max="100" aria-label="Zoom" />
      <button aria-label="Zoom in"><svg class="i16" viewBox="0 0 16 16"><circle cx="8" cy="8" r="7.300" fill="none" stroke="#444" /><path d="M4.500 8h7M8 4.500v7" stroke="#333" /></svg></button>
      <span class="keys"><span>CAP</span><span class="lit">NUM</span><span>SCRL</span><span>WAN</span></span>
    </footer>

    <form class="dialog" role="dialog" aria-label="Paste Element" @submit.prevent>
      <div class="dtitle"><h2>Paste Element</h2><button type="button" class="winbtn" aria-label="Close dialog"><svg class="i10"><use href="#x" /></svg></button></div>
      <div class="dmain">
        <div class="top">
          <fieldset class="opts">
            <legend>Paste Element into Diagram</legend>
            <label><input v-model="mode" type="radio" name="mode" value="link" />as Simple Link</label>
            <label><input v-model="mode" type="radio" name="mode" value="instance" />as Instance of Element (Object)</label>
            <label class="sub"><input type="checkbox" />Copy connectors</label>
            <label><input v-model="mode" type="radio" name="mode" value="child" />as New Child (Generalization)</label>
          </fieldset>
          <div class="btns"><button class="push ok">OK</button><button type="button" class="push">Cancel</button></div>
        </div>
        <fieldset class="defaults">
          <legend>Set Selection as Default for:</legend>
          <label><input type="checkbox" />All Drag and Drop</label>
          <label><input type="checkbox" />This Dialog</label>
        </fieldset>
        <label class="only"><input type="checkbox" />Only show this dialog when Ctrl+Mouse drag is used</label>
      </div>
    </form>
  </div>
</template>

<style>
body { margin: 0; overflow: hidden; }
</style>

<style scoped>
* { box-sizing: border-box; }
h1, h2, h3, p, ul { margin: 0; padding: 0; font-weight: normal; }
button, input, select { font: inherit; color: inherit; }
button { border: 0; padding: 0; background: none; display: flex; align-items: center; justify-content: center; }
svg { display: block; flex: none; }
.defs { position: absolute; width: 0; height: 0; }
.i16 { width: 16px; height: 16px; }
.i10 { width: 10px; height: 10px; }
.i8 { width: 8px; height: 8px; }
.dn { width: 5px; height: 3px; }
.dn9 { width: 9px; height: 5px; }
.exp { width: 9px; height: 9px; }
.flip { transform: rotate(180deg); }

.app { position: relative; display: flex; flex-direction: column; min-height: 100vh; font: 11px/16px "Noto Sans", "Open Sans", sans-serif; color: #000; background: linear-gradient(90deg, #d4d0c8, #fff); }

.titlebar { display: flex; align-items: center; height: 18px; padding: 0 2px; background: linear-gradient(90deg, #808080, #c0c0c0); }
.titlebar h1 { flex: 1; margin-left: 2px; font-size: 11px; line-height: 16px; font-weight: bold; color: #d4d0c8; }
.winbtn { width: 16px; height: 14px; background: #d4d0c8; border: 1px solid; border-color: #fff #404040 #404040 #fff; box-shadow: inset -1px -1px #808080; }
.apart { margin-left: 2px; }

.menubar { display: flex; align-items: center; height: 25px; padding-left: 4px; gap: 15px; }
.menubar .grip { margin-right: -4px; }
.grip { width: 2px; height: 13px; background: repeating-linear-gradient(#8c8a84 0 2px, transparent 2px 4px); }

.toolrow { display: flex; height: 26px; gap: 3px; }
.toolbar { display: flex; align-items: center; background: linear-gradient(#fff, #f4f3f1 40%, #cac6be); }
.main { height: 25px; padding-left: 4px; border-radius: 3px; }
.main .grip { margin-right: 3px; }
.tb { width: 22px; height: 22px; flex: none; }
.drop { width: 11px; height: 22px; flex: none; }
.drop.wide { width: 15px; }
.dim { color: #8c857f; }
.sep { width: 8px; height: 18px; flex: none; background: linear-gradient(#a8a49c, #a8a49c) center / 1px 100% no-repeat; }
.combo { display: flex; align-items: center; width: 148px; height: 19px; margin: 0 4px 0 2px; background: #fff; position: relative; flex: none; }
.combo select { appearance: none; width: 100%; height: 19px; border: 0; padding: 0 16px 0 5px; background: linear-gradient(#d9d5ce, #d9d5ce) right 1px center / 12px 17px no-repeat #fff; }
.combo .dn { position: absolute; right: 4px; pointer-events: none; }
.flat { width: 144px; margin: 0 4px 0 1px; }
.flat select { padding-left: 3px; }
.overflow { flex-direction: column; justify-content: flex-end; gap: 4px; width: 10px; height: 25px; padding-bottom: 3px; margin-left: 2px; background: linear-gradient(#e8e6e2, #8c8a86); border-radius: 0 3px 3px 0; }

.work { flex: 1; display: flex; min-height: 0; }
.strip { width: 22px; padding-top: 4px; flex: none; }
.vtab { flex-direction: column; justify-content: flex-start; width: 20px; height: 91px; padding-top: 2px; gap: 2px; color: #444; border: 1px solid #808080; border-left: 0; border-radius: 0 3px 3px 0; }
.vtab span { writing-mode: vertical-rl; font-size: 11px; line-height: 16px; white-space: nowrap; }

.left { display: flex; flex-direction: column; width: 113px; flex: none; }
.ptitle { display: flex; align-items: center; height: 18px; padding: 0 2px 0 4px; background: #808080; color: #fff; flex: none; }
.ptitle h2 { flex: 1; font-size: 11px; line-height: 16px; color: #d4d0c8; white-space: nowrap; }
.ptitle button { width: 17px; height: 16px; }
.ptitle.active { background: #0a246a; padding-right: 2px; }
.ptitle.active h2 { color: #fff; }
.pbody { border: 1px solid #808080; background: #ece9e4; padding: 3px; display: flex; flex-direction: column; }
.toolbox { height: 272px; padding: 4px 3px 4px 4px; border-bottom-color: #303030; }
.moretools { justify-content: flex-end; height: 20px; padding-right: 8px; font: 11px/16px "Liberation Sans", Arial, sans-serif; background: linear-gradient(#868482, #d8d4cc); border: 1px solid #808080; flex: none; }
.tbmain { flex: 1; display: flex; min-height: 0; border: 1px solid #808080; border-width: 0 0 1px 1px; }
.tblist { flex: 1; min-width: 0; padding-top: 1px; background: linear-gradient(90deg, #fcfcfb, #cdc9c1); overflow: hidden; }
.tblist h3 { display: flex; align-items: center; gap: 7px; height: 17px; margin-bottom: 4px; padding-left: 6px; font-size: 11px; font-weight: bold; background: linear-gradient(90deg, #d8d4c8, #ece8e0); border-bottom: 1px solid #fff; white-space: nowrap; }
.sdm { list-style: none; margin-bottom: 5px; }
.sdm li { display: flex; align-items: center; height: 20px; gap: 15px; padding-left: 4px; white-space: nowrap; }
.common { display: grid; grid-template-columns: repeat(3, 28px); grid-auto-rows: 28px; }
.vscroll, .hscroll { display: flex; background: repeating-conic-gradient(#fff 0 25%, #d4d0c8 0 50%) 0 0 / 2px 2px; }
.vscroll { flex-direction: column; width: 17px; flex: none; }
.vscroll button:last-child, .hscroll button:last-child { margin: auto 0 0 0; }
.hscroll button:last-child { margin: 0 0 0 auto; }
.vscroll button, .hscroll button { width: 16px; height: 16px; }
.vscroll button, .hscroll button, .thumb { background: #d4d0c8; border: 1px solid; border-color: #fff #404040 #404040 #fff; box-shadow: inset -1px -1px #a8a49c; flex: none; }
.vscroll .thumb { height: 231px; width: 16px; }
.tbs .thumb { height: 165px; }
.hscroll { height: 16px; flex: 1; }
.hscroll .thumb { width: 61%; }
.ptabs { display: flex; height: 24px; color: #555; padding-left: 2px; flex: none; }
.ptab { gap: 3px; height: 21px; padding: 0 3px; white-space: nowrap; }
.ptab.on { background: #fff; color: #000; border: 1px solid #808080; border-top: 0; border-radius: 0 0 3px 3px; }
.tabsep { width: 1px; height: 14px; margin: 4px 1px; background: #808080; }
.up { height: 27px; }
.up .ptab { height: 22px; padding: 0 4px; }
.rtabs { padding-left: 3px; }
.rtabs .ptab { gap: 2px; padding: 0 4px 0 2px; }
.rtabs .tabsep { margin: 4px 2px; }
.rtabs .ptab.on { padding: 0 2px; }
.pan { flex: 1; background: #d4d0c8; border-bottom-color: #303030; padding: 4px 3px 3px 4px; overflow: hidden; }
.zooms { height: 24px; flex: none; overflow: hidden; padding-left: 1px; }
.mini { background: #fff; overflow: hidden; }

.center { flex: 1; min-width: 0; display: flex; flex-direction: column; margin-left: 4px; border-left: 1px solid #808080; background: #d4d0c8; }
.dhead { display: flex; align-items: center; height: 28px; padding: 0 4px 0 18px; background: linear-gradient(#b6b3ad, #84827d); border-bottom: 2px solid #f4f2ee; border-top: 1px solid #808080; font: 11px/16px "Liberation Sans", Arial, sans-serif; }
.dhead p { flex: 1; display: flex; gap: 3px; margin-left: 4px; white-space: nowrap; }
.dhead button { width: 16px; height: 16px; background: #a5a29c; flex: none; }
.dhead .far { margin-left: 13px; }
.dhead .near { margin-left: 5px; }
.fmt { height: 26px; padding-left: 1px; }
.gap { margin-left: 2px; }
.num { width: 25px; height: 17px; border: 0; margin: 0 2px 0 3px; padding: 0 5px; background: #d9d5ce; color: #888; flex: none; }
.spin { display: flex; flex-direction: column; width: 16px; margin-right: 2px; flex: none; }
.spin button { height: 8px; background: #d4d0c8; border: 1px solid; border-color: #fff #606060 #606060 #fff; }
.style { width: 145px; }
.style select { padding-left: 3px; }
.fmt .overflow { margin-left: auto; }
.canvasrow { flex: 1; display: flex; min-height: 0; border-top: 1px solid #808080; margin-right: 1px; }
.canvas { flex: 1; min-width: 0; overflow: hidden; background: #fff; }
.diagram { font: 11px "Liberation Sans", Arial, sans-serif; }
.hrow { display: flex; height: 17px; padding-right: 18px; border-bottom: 1px solid #404040; }
.doctabs { display: flex; height: 22px; border-bottom: 1px solid #fff; margin-bottom: 2px; }
.nav { width: 16px; height: 21px; }
.end { margin-left: auto; margin-right: 8px; }
.slant { width: 20px; height: 21px; }
.over { margin-left: -18px; z-index: 1; }
.dtab { gap: 8px; height: 20px; padding: 0 6px 0 8px; background: linear-gradient(#fff 55%, #d4d0c8 60%); border: 1px solid #404040; border-top: 0; border-left: 0; white-space: nowrap; }
.dtab + .dtab { padding: 0 10px 0 12px; }
.dtab.on { padding: 0 5px 0 8px; background: #fff; font-weight: bold; }

.right { display: flex; flex-direction: column; width: 247px; margin-left: 4px; flex: none; }
.browser { flex: 1; background: #fff; min-height: 0; padding: 5px 3px 3px; border-bottom-color: #303030; }
.btools { height: 22px; padding-left: 1px; overflow: hidden; flex: none; }
.tree { flex: 1; padding: 1px 0 0 6px; margin-right: -3px; overflow: hidden; font: 11px/16px "DejaVu Sans Condensed", Tahoma, sans-serif; }
.row { display: flex; align-items: center; height: 16px; white-space: nowrap; }
.cell { position: relative; display: flex; align-items: center; justify-content: center; width: 15px; height: 16px; flex: none; }
.line, .node { background: repeating-linear-gradient(#888 0 1px, transparent 1px 2px) 7px 0 / 1px 100% no-repeat; }
.node { background: repeating-linear-gradient(#888 0 1px, transparent 1px 2px) 7px 0 / 1px 100% no-repeat, repeating-linear-gradient(90deg, #888 0 1px, transparent 1px 2px) 8px 8px / 6px 1px no-repeat; }
.node.last { background-size: 1px 8px, 6px 1px; }
.node.root { background: none; }
.ti { width: 22px; height: 16px; margin: 0 2px; }
.browser .hscroll { flex: none; }
.hscroll .big { width: 184px; }

.hidden-tabs { display: flex; gap: 13px; height: 21px; padding: 0 0 0 26px; color: #444; }
.hidden-tabs button { gap: 2px; height: 20px; padding: 0 2px; border: 1px solid #808080; border-bottom: 0; border-radius: 3px 3px 0 0; }
.status { display: flex; align-items: center; height: 26px; padding: 0 0 3px 2px; border-bottom: 1px solid #d4d0c8; }
.s1 { width: 267px; white-space: nowrap; }
.s2 { width: 145px; color: #888; }
.bar { width: 1px; height: 16px; background: #808080; }
.fillspace { flex: 1; }
.status button { margin: 0 3px; }
.status input { appearance: none; width: 90px; height: 16px; margin: 0 5px 0 0; background: linear-gradient(#808080, #808080) center / 100% 1px no-repeat; }
.status input::-webkit-slider-thumb { appearance: none; width: 8px; height: 16px; background: #d4d0c8; border: 1px solid #404040; }
.keys { display: flex; align-items: center; width: 175px; height: 15px; color: #999; border: 1px solid #c4c0b8; border-radius: 3px; }
.keys span { flex: 1; height: 10px; display: flex; align-items: center; justify-content: center; border-right: 1px solid #808080; }
.keys .lit { color: #000; }

.dialog { position: absolute; left: 325px; top: 250px; width: 375px; height: 241px; padding: 3px; background: #d4d0c8; border: 1px solid; border-color: #d4d0c8 #404040 #404040 #d4d0c8; box-shadow: inset 1px 1px #fff, inset -1px -1px #808080; font: 11px/16px "DejaVu Sans Condensed", Tahoma, sans-serif; }
.dtitle { display: flex; align-items: center; height: 18px; padding: 0 2px 0 1px; color: #fff; background: linear-gradient(90deg, #0a246a, #a6caf0); }
.dtitle h2 { flex: 1; font-size: 11px; font-weight: bold; }
.dtitle .winbtn { color: #000; }
.dmain { padding: 12px 10px 0; }
.top { display: flex; gap: 17px; }
fieldset { margin: 0; border: 1px solid #808080; box-shadow: 1px 1px #fff, inset 1px 1px #fff; min-width: 0; }
legend { padding: 0 4px 0 3px; background: #d4d0c8; line-height: 14px; }
label { display: flex; align-items: center; gap: 5px; white-space: nowrap; }
.opts { width: 257px; height: 105px; padding: 7px 0 0 21px; }
.opts label { height: 18px; }
.opts .sub { height: 22px; padding-left: 17px; }
.opts legend { margin-left: -18px; }
.btns { display: flex; flex-direction: column; gap: 7px; padding-top: 6px; }
.push { width: 76px; height: 24px; background: #d4d0c8; border: 1px solid; border-color: #fff #404040 #404040 #fff; box-shadow: inset -1px -1px #808080; }
.ok { border-color: #000; box-shadow: inset 1px 1px #fff, inset -1px -1px #404040, inset -2px -2px #808080; }
.defaults { display: flex; gap: 25px; width: 347px; height: 48px; margin-top: 9px; padding: 7px 0 0 41px; }
.defaults legend { margin-left: -38px; }
.defaults label { height: 18px; }
.only { margin-top: 10px; padding-left: 22px; }
.dialog input { appearance: none; width: 12px; height: 12px; margin: 0; background: #fff; border: 1px solid; border-color: #606060 #fff #fff #606060; flex: none; }
.dialog input[type="radio"] { border-radius: 6px; width: 12px; height: 12px; }
.dialog input[type="radio"]:checked { background: radial-gradient(circle, #000 0 2px, #fff 3px); }
</style>
